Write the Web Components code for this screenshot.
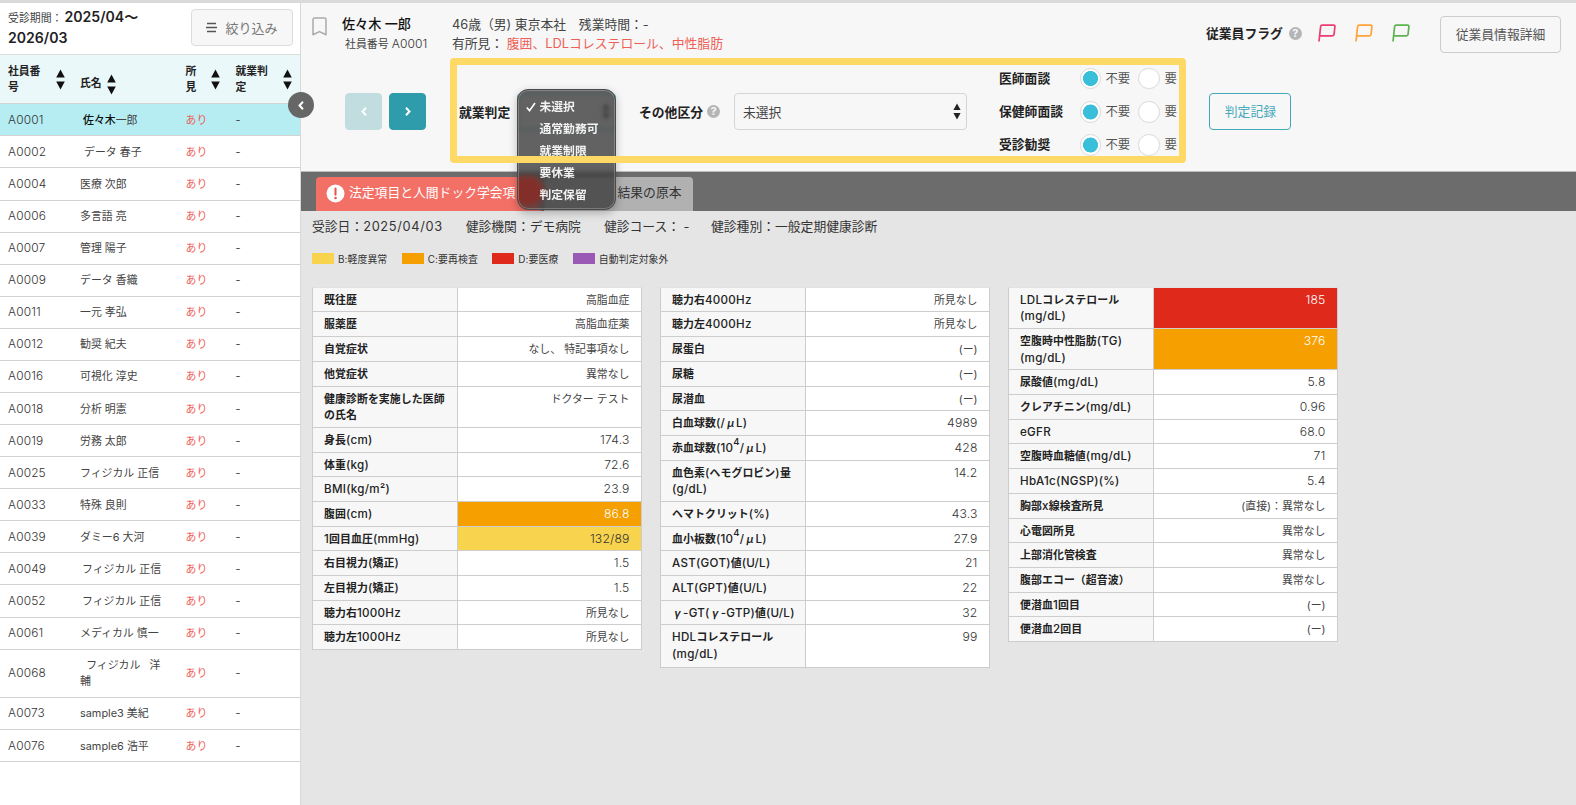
<!DOCTYPE html>
<html lang="ja">
<head>
<meta charset="utf-8">
<title>就業判定</title>
<style>
    body {
        margin: 0;
        font-family: Inter, "Noto Sans CJK JP", sans-serif;
        font-size: 12.8px;
        color: #444;
    }
</style>
</head>
<body>
<health-app></health-app>

<script>
class BaseElement extends HTMLElement {
    constructor() {
        super();
        this.root = this.attachShadow({ mode: 'open' });
    }

    connectedCallback() {
        this.root.innerHTML = this.template();
    }
}

class SortArrows extends BaseElement {
    template() {
        return `
<style>
    :host { display: block; width: 9px; height: 21px; flex: none; }
    svg { display: block; }
</style>
<svg width="9" height="21" viewBox="0 0 9 21" fill="#111"><path d="M4.5 0.5 8.8 8.5H0.2zM0.2 12.5H8.8L4.5 20.5z"/></svg>
`
    }
}

class HelpIcon extends BaseElement {
    template() {
        return `
<style>
    :host {
        display: flex; align-items: center; justify-content: center; flex: none;
        width: 13px; height: 13px; border-radius: 50%;
        background: #b5b5b5; color: #f7f7f7; font-size: 11px; font-weight: 700; line-height: 13px;
    }
</style>
?
`
    }
}

class AppButton extends BaseElement {
    template() {
        return `
<style>
    :host {
        display: flex; align-items: center; justify-content: center; flex: none;
        box-sizing: border-box; height: 37px; border: 1px solid #ccc; border-radius: 4px;
        background: #f7f7f7; color: #555; line-height: 18px; white-space: nowrap;
    }
    :host([kind="teal"]) { border-color: #45a8b8; color: #48a9ba; }
    :host([kind="next"]) { background: #2f9cab; border-color: #2f9cab; color: #fff; width: 37px; }
    :host([kind="prev"]) { background: #c1dde0; border-color: #c1dde0; color: #fff; width: 37px; }
</style>
<slot></slot>
`
    }
}

class PatientRow extends BaseElement {
    template() {
        const indent = this.getAttribute('indent') || 0;
        return `
<style>
    :host {
        display: grid; grid-template-columns: 72px 85px 20.5px 50px 66px; align-items: center;
        box-sizing: border-box; height: 32.08px; padding-left: 8px;
        border-bottom: 1px solid #d2d2d2; font-size: 10.9px; line-height: 16px;
    }
    :host([selected]) { background: #b5edf3; }
    :host([tall]) { height: 48.3px; }
    .name { padding-left: ${indent}px; white-space: pre; }
    .found { padding-left: 20.5px; color: #ef5f58; white-space: nowrap; }
    .result { padding-left: 50px; }
    .id { font-size: 11.9px; letter-spacing: .15px; font-weight: 300; color: #333; }
</style>
<span class="id">${this.getAttribute('no')}</span>
<span class="name"><slot></slot></span>
<span class="found">あり</span>
<span class="result">-</span>
`
    }
}

const patients = [
    ['A0001', '<b style="font-weight:500;color:#111">佐々木</b>一郎', 3],
    ['A0002', 'データ 春子', 4],
    ['A0004', '医療 次郎'],
    ['A0006', '多言語 亮'],
    ['A0007', '管理 陽子'],
    ['A0009', 'データ 香織'],
    ['A0011', '一元 孝弘'],
    ['A0012', '勧奨 紀夫'],
    ['A0016', '可視化 淳史'],
    ['A0018', '分析 明憲'],
    ['A0019', '労務 太郎'],
    ['A0025', 'フィジカル 正信'],
    ['A0033', '特殊 良則'],
    ['A0039', 'ダミー6 大河'],
    ['A0049', 'フィジカル 正信', 2],
    ['A0052', 'フィジカル 正信', 2],
    ['A0061', 'メディカル 慎一'],
    ['A0068', '  フィジカル   洋\n輔'],
    ['A0073', 'sample3 美紀'],
    ['A0076', 'sample6 浩平']
];

class PatientList extends BaseElement {
    template() {
        return `
<style>
    :host {
        display: block; box-sizing: border-box; width: 301px; height: 802px;
        background: #fff; border-right: 1px solid #d8d8d8;
    }
    .period {
        display: flex; justify-content: space-between; align-items: flex-start;
        box-sizing: border-box; height: 51px; padding: 5px 7px 0 8px;
    }
    .period p { margin: -1px 0 0; font-size: 10.9px; line-height: 19.3px; white-space: nowrap; }
    .period p span { margin-right: 2px; }
    .period b { font-size: 14.1px; font-weight: 600; color: #222; }
    app-button { width: 102px; gap: 8px; margin-top: 1px; color: #777; border-color: #dcdcdc; font-size: 13px; }
    .head {
        display: flex; align-items: center; box-sizing: border-box; height: 50.3px; padding: 1px 0 0 8px;
        border-top: 1px solid #ddd; border-bottom: 1px solid #d2d2d2; background: #ebf8fa;
        font-size: 10.8px; font-weight: 700; line-height: 16px; color: #222;
    }
    .head div { display: flex; align-items: center; }
    .c1 { width: 72px; gap: 16px; }
    .c2 { width: 105.5px; gap: 5px; padding-top: 9px; box-sizing: border-box; }
    .c3 { width: 50px; gap: 15px; }
    .c4 { gap: 15px; }
</style>
<div class="period">
    <p><span>受診期間：</span><b>2025/04～<br>2026/03</b></p>
    <app-button>
        <svg width="11" height="11" viewBox="0 0 11 11" stroke="#555" stroke-width="1.4"><path d="M1 1.5H10M0 5.5H11M1 9.5H10"/></svg>
        <span>絞り込み</span>
    </app-button>
</div>
<div class="head">
    <div class="c1"><span>社員番<br>号</span><sort-arrows></sort-arrows></div>
    <div class="c2"><span>氏名</span><sort-arrows></sort-arrows></div>
    <div class="c3"><span>所<br>見</span><sort-arrows></sort-arrows></div>
    <div class="c4"><span>就業判<br>定</span><sort-arrows></sort-arrows></div>
</div>
${patients.map(([no, name, indent], i) => `<patient-row no="${no}" indent="${indent || 0}" ${i === 0 ? 'selected' : ''} ${no === 'A0068' ? 'tall' : ''}>${name}</patient-row>`).join('')}
`
    }
}

class FlagIcon extends BaseElement {
    template() {
        return `
<style>
    :host { display: block; width: 18px; height: 18px; }
    svg { display: block; }
</style>
<svg width="18" height="18" viewBox="0 0 18 18" fill="none" stroke="${this.getAttribute('color')}" stroke-width="1.7" stroke-linejoin="round"><path d="M1 17.5 2.6 2.7Q2.8 1.2 4.2 1.2H15.6Q17.1 1.2 16.9 2.7L16.1 10.2Q15.9 11.8 14.4 11.8H2.1"/></svg>
`
    }
}

class RadioPair extends BaseElement {
    template() {
        return `
<style>
    :host { display: grid; grid-template-columns: 81px 25.5px 33px 26px auto; align-items: center; height: 33.2px; line-height: 18px; white-space: nowrap; }
    b { font-weight: 700; color: #222; }
    i { box-sizing: border-box; width: 21.5px; height: 21.5px; border: 1px solid #d9d9d9; border-radius: 50%; background: #fff; }
    i.on { background: radial-gradient(circle, #3abfda 7.2px, #fff 7.8px); }
    span { font-size: 12.4px; color: #555; }
</style>
<b><slot></slot></b><i class="on"></i><span>不要</span><i></i><span>要</span>
`
    }
}

class OptionMenu extends BaseElement {
    template() {
        const items = ['未選択', '通常勤務可', '就業制限', '要休業', '判定保留'];
        return `
<style>
    :host {
        display: block; box-sizing: border-box; width: 99px; height: 121px; padding: 5.5px 0 0 21.5px;
        border: 1px solid #4b4b4b; border-radius: 11px;
        background: radial-gradient(ellipse 21px 19px at 9px 101px, rgba(132, 46, 40, .95) 55%, transparent), rgba(60, 60, 60, .8);
        box-shadow: inset 0 0 0 1px rgba(255, 255, 255, .22), 0 3px 9px rgba(0, 0, 0, .25);
        backdrop-filter: blur(2px);
        color: #f2f2f2; font-size: 11.8px; font-weight: 700;
    }
    div { display: flex; align-items: center; height: 22px; line-height: 18px; white-space: nowrap; }
    svg { margin: 0 4px 0 -14px; }
</style>
${items.map((text, i) => `<div>${i === 0 ? '<svg width="10" height="10" viewBox="0 0 10 10" fill="none" stroke="#fff" stroke-width="1.6"><path d="M0.8 5.5 3.5 8.6 9 1"/></svg>' : ''}<span>${text}</span></div>`).join('')}
`
    }
}

class PatientHeader extends BaseElement {
    template() {
        return `
<style>
    :host { display: block; position: relative; box-sizing: border-box; height: 169px; background: #f7f7f7; border-bottom: 1px solid #bdbdbd; }
    .top { display: flex; height: 55px; line-height: 19px; white-space: nowrap; }
    .mark { margin: 14px 0 0 11px; width: 15px; height: 19px; }
    .who { width: 110px; margin: 11.5px 0 0 15px; }
    .who b { display: block; font-weight: 500; font-size: 13.1px; color: #111; }
    .who small { display: block; padding-left: 3px; font-size: 10.9px; line-height: 20px; }
    .who small span { font-size: 12.1px; font-weight: 300; color: #333; letter-spacing: .1px; }
    .info { width: 754px; margin-top: 11.5px; line-height: 19.5px; }
    .info em { font-style: normal; color: #ef5f58; letter-spacing: .03px; }
    .flags { display: flex; align-items: center; height: 18px; margin-top: 21px; width: 234px; }
    .flags b { font-weight: 700; color: #222; margin-right: 6px; }
    flag-icon { margin-left: 18.8px; }
    help-icon + flag-icon { margin-left: 16.5px; }
    .detail { margin-top: 13px; width: 121px; }
    .judge { display: flex; align-items: center; height: 107px; margin-top: 0; }
    .nav { display: flex; gap: 7px; margin-left: 44px; }
    .frame {
        position: absolute; left: 148.5px; top: 55px; width: 736px; height: 104.5px; box-sizing: border-box;
        border: 7.3px solid #ffd966; border-radius: 4px; z-index: 3;
    }
    .label { font-weight: 700; color: #222; margin-left: 33px; width: 52px; white-space: nowrap; }
    .select {
        display: flex; align-items: center; justify-content: space-between; box-sizing: border-box;
        width: 233px; height: 37px; margin-left: 14px; padding: 0 5px 0 8px; border: 1px solid #d5d5d5; border-radius: 4px;
    }
    .select svg { display: block; }
    .current { width: 99px; margin-left: 6px; justify-content: flex-end; border-color: #3aa5b5; }
    .other { display: flex; align-items: center; gap: 4px; margin-left: 23px; white-space: nowrap; font-weight: 700; color: #222; }
    .radios { margin-left: 32px; padding-top: .5px; }
    .record { width: 82px; margin-left: 32.5px; }
    option-menu { position: absolute; left: 216px; top: 86px; z-index: 2; }
</style>
<div class="top">
    <svg class="mark" viewBox="0 0 15 19" fill="none" stroke="#aaa" stroke-width="1.5" stroke-linejoin="round"><path d="M1 2.5Q1 1 2.5 1H12.5Q14 1 14 2.5V17.7L7.5 14.6 1 17.7z"/></svg>
    <div class="who"><b>佐々木 一郎</b><small>社員番号 <span>A0001</span></small></div>
    <div class="info">46歳（男) 東京本社　残業時間：-<br>有所見： <em>腹囲、LDLコレステロール、中性脂肪</em></div>
    <div class="flags">
        <b>従業員フラグ</b><help-icon></help-icon>
        <flag-icon color="#ec3d70"></flag-icon><flag-icon color="#ffa338"></flag-icon><flag-icon color="#5cb350"></flag-icon>
    </div>
    <app-button class="detail">従業員情報詳細</app-button>
</div>
<div class="judge">
    <div class="nav">
        <app-button kind="prev"><svg width="6" height="9" viewBox="0 0 6 9" fill="none" stroke="#fff" stroke-width="2"><path d="M5 0.8 1.5 4.5 5 8.2"/></svg></app-button>
        <app-button kind="next"><svg width="6" height="9" viewBox="0 0 6 9" fill="none" stroke="#fff" stroke-width="2"><path d="M1 0.8 4.5 4.5 1 8.2"/></svg></app-button>
    </div>
    <div class="label">就業判定</div>
    <div class="select current"><svg width="8" height="17" viewBox="0 0 8 17" fill="#222"><path d="M4 0.5 7.6 7H0.4zM0.4 10H7.6L4 16.5z"/></svg></div>
    <div class="other">その他区分<help-icon></help-icon></div>
    <div class="select">未選択<svg width="8" height="17" viewBox="0 0 8 17" fill="#222"><path d="M4 0.5 7.6 7H0.4zM0.4 10H7.6L4 16.5z"/></svg></div>
    <div class="radios">
        <radio-pair>医師面談</radio-pair>
        <radio-pair>保健師面談</radio-pair>
        <radio-pair>受診勧奨</radio-pair>
    </div>
    <app-button class="record" kind="teal">判定記録</app-button>
</div>
<option-menu></option-menu>
<div class="frame"></div>
`
    }
}

class TabBar extends BaseElement {
    template() {
        return `
<style>
    :host { display: flex; align-items: flex-end; height: 38.5px; padding-left: 15px; gap: 3px; background: #6c6c6c; box-sizing: border-box; }
    div { display: flex; align-items: center; box-sizing: border-box; height: 34px; padding-bottom: 4px; border-radius: 4px 4px 0 0; white-space: nowrap; }
    .on { width: 225px; padding-left: 10px; gap: 4px; background: #f37067; color: #fff; }
    .on svg { position: relative; top: 1.5px; }
    .off { width: 149px; justify-content: flex-end; padding-right: 11.5px; background: #b1b1b1; color: #333; }
</style>
<div class="on">
    <svg width="19" height="19" viewBox="0 0 19 19"><circle cx="9.5" cy="9.5" r="9" fill="#fff"/><path d="M9.5 4.6V10.8" stroke="#f0554d" stroke-width="2.1" stroke-linecap="round"/><circle cx="9.5" cy="14" r="1.3" fill="#f0554d"/></svg>
    <span>法定項目と人間ドック学会項</span>
</div>
<div class="off">結果の原本</div>
`
    }
}

class LegendItem extends BaseElement {
    template() {
        return `
<style>
    :host { display: flex; align-items: center; gap: 4px; font-size: 9.9px; line-height: 14px; letter-spacing: .08px; white-space: nowrap; color: #333; }
    i { width: 22px; height: 11.5px; background: ${this.getAttribute('color')}; }
</style>
<i></i><slot></slot>
`
    }
}

// one exam item: [label, value, judgement]
class ResultTable extends BaseElement {
    set rows(rows) {
        this._rows = rows;
        this.root.innerHTML = this.template();
    }

    // latin runs are set a little larger and lighter than the kanji, μ and γ take a full cell
    label(text) {
        return text
            .replace(/<[^>]+>|[!-;=?-~²]+/g, part => part[0] === '<' ? part : `<em>${part}</em>`)
            .replace(/[μγ]/g, '<i>$&</i>');
    }

    template() {
        return `
<style>
    :host { display: block; box-sizing: border-box; width: 329.5px; border: 1px solid #ccc; border-top-color: #e2e2e2; font-size: 10.9px; line-height: 16.6px; }
    .row { display: grid; grid-template-columns: 145.3px 1fr; box-sizing: border-box; height: 24.7px; border-bottom: 1px solid #cdcdcd; }
    .row:last-child { border-bottom: 0; height: 23.7px; }
    .row.two { height: 41.3px; }
    .row b, .row span { padding: 4px 11px 0 11px; white-space: nowrap; }
    .row b { background: #f7f7f7; border-right: 1px solid #ccc; font-weight: 600; color: #222; letter-spacing: .08px; }
    .row span { background: #fff; text-align: right; }
    .row .num { font-size: 12.2px; letter-spacing: .15px; font-weight: 300; color: #333; }
    .row .B { background: #f8d34e; }
    .row .C { background: #f59f00; color: #fff; }
    .row .D { background: #de291b; color: #fff; }
    em { font-style: normal; font-weight: 500; font-size: 11.6px; letter-spacing: .28px; }
    sup { font-size: 9.5px; line-height: 0; vertical-align: 7px; }
    sup em { font-size: inherit; }
    i { display: inline-block; width: 11px; line-height: 1; text-align: center; }
</style>
${(this._rows || []).map(([label, value, rank]) => `<div class="row ${label.includes('<br>') ? 'two' : ''}"><b>${this.label(label)}</b><span class="${/^[\d./]+$/.test(value) ? 'num' : ''} ${rank || ''}">${value}</span></div>`).join('')}
`
    }
}

const results = [
    [
        ['既往歴', '高脂血症'],
        ['服薬歴', '高脂血症薬'],
        ['自覚症状', 'なし、 特記事項なし'],
        ['他覚症状', '異常なし'],
        ['健康診断を実施した医師<br>の氏名', 'ドクター テスト'],
        ['身長(cm)', '174.3'],
        ['体重(kg)', '72.6'],
        ['BMI(kg/m²)', '23.9'],
        ['腹囲(cm)', '86.8', 'C'],
        ['1回目血圧(mmHg)', '132/89', 'B'],
        ['右目視力(矯正)', '1.5'],
        ['左目視力(矯正)', '1.5'],
        ['聴力右1000Hz', '所見なし'],
        ['聴力左1000Hz', '所見なし']
    ],
    [
        ['聴力右4000Hz', '所見なし'],
        ['聴力左4000Hz', '所見なし'],
        ['尿蛋白', '(ー)'],
        ['尿糖', '(ー)'],
        ['尿潜血', '(ー)'],
        ['白血球数(/μL)', '4989'],
        ['赤血球数(10<sup>4</sup>/μL)', '428'],
        ['血色素(ヘモグロビン)量<br>(g/dL)', '14.2'],
        ['ヘマトクリット(%)', '43.3'],
        ['血小板数(10<sup>4</sup>/μL)', '27.9'],
        ['AST(GOT)値(U/L)', '21'],
        ['ALT(GPT)値(U/L)', '22'],
        ['γ-GT(γ-GTP)値(U/L)', '32'],
        ['HDLコレステロール<br>(mg/dL)', '99']
    ],
    [
        ['LDLコレステロール<br>(mg/dL)', '185', 'D'],
        ['空腹時中性脂肪(TG)<br>(mg/dL)', '376', 'C'],
        ['尿酸値(mg/dL)', '5.8'],
        ['クレアチニン(mg/dL)', '0.96'],
        ['eGFR', '68.0'],
        ['空腹時血糖値(mg/dL)', '71'],
        ['HbA1c(NGSP)(%)', '5.4'],
        ['胸部x線検査所見', '(直接)：異常なし'],
        ['心電図所見', '異常なし'],
        ['上部消化管検査', '異常なし'],
        ['腹部エコー（超音波）', '異常なし'],
        ['便潜血1回目', '(ー)'],
        ['便潜血2回目', '(ー)']
    ]
];

class ExamResults extends BaseElement {
    connectedCallback() {
        super.connectedCallback();
        this.root.querySelectorAll('result-table').forEach((table, i) => table.rows = results[i]);
    }

    template() {
        return `
<style>
    :host { display: block; padding: 6px 0 0 11px; }
    .meta { display: flex; gap: 23px; line-height: 20px; white-space: nowrap; color: #333; }
    .meta b { font-weight: 400; letter-spacing: .65px; }
    .meta span:nth-child(4) { margin-left: -1.5px; }
    .legend { display: flex; gap: 14.5px; margin-top: 15px; }
    .tables { display: flex; align-items: flex-start; gap: 18.5px; margin-top: 21.3px; }
</style>
<div class="meta"><span>受診日：<b>2025/04/03</b></span><span>健診機関：デモ病院</span><span>健診コース： -</span><span>健診種別：一般定期健康診断</span></div>
<div class="legend">
    <legend-item color="#f8d34e">B:軽度異常</legend-item>
    <legend-item color="#f59f00">C:要再検査</legend-item>
    <legend-item color="#de291b">D:要医療</legend-item>
    <legend-item color="#9b59b6">自動判定対象外</legend-item>
</div>
<div class="tables"><result-table></result-table><result-table></result-table><result-table></result-table></div>
`
    }
}

class HealthApp extends BaseElement {
    template() {
        return `
<style>
    :host { display: flex; position: relative; box-sizing: border-box; height: 805px; overflow: hidden; border-top: 3px solid #dadada; background: #e5e5e5; }
    main { flex: 1; min-width: 0; }
    .toggle {
        position: absolute; left: 288px; top: 89px; width: 26px; height: 26px; border-radius: 50%;
        display: flex; align-items: center; justify-content: center; background: #666; z-index: 5;
    }
</style>
<patient-list></patient-list>
<main>
    <patient-header></patient-header>
    <tab-bar></tab-bar>
    <exam-results></exam-results>
</main>
<div class="toggle"><svg width="6" height="9" viewBox="0 0 6 9" fill="none" stroke="#fff" stroke-width="2"><path d="M5 0.8 1.5 4.5 5 8.2"/></svg></div>
`
    }
}

window.customElements.define('sort-arrows', SortArrows);
window.customElements.define('help-icon', HelpIcon);
window.customElements.define('app-button', AppButton);
window.customElements.define('patient-row', PatientRow);
window.customElements.define('patient-list', PatientList);
window.customElements.define('flag-icon', FlagIcon);
window.customElements.define('radio-pair', RadioPair);
window.customElements.define('option-menu', OptionMenu);
window.customElements.define('patient-header', PatientHeader);
window.customElements.define('tab-bar', TabBar);
window.customElements.define('legend-item', LegendItem);
window.customElements.define('result-table', ResultTable);
window.customElements.define('exam-results', ExamResults);
window.customElements.define('health-app', HealthApp);
</script>
</body>
</html>
